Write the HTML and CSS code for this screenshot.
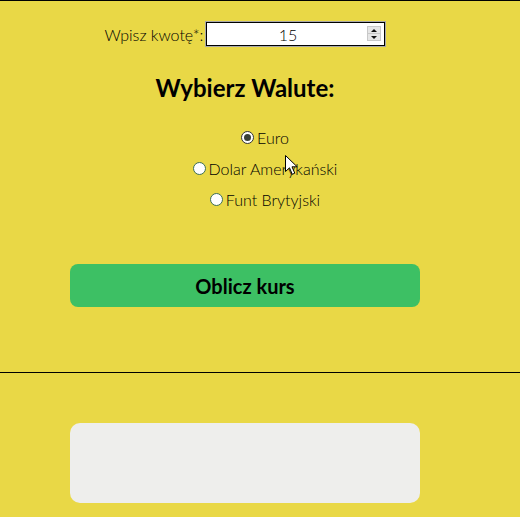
FILE: index.html
```html
<!DOCTYPE html>
<html lang="pl">
<head>
<meta charset="utf-8">
<title>Kalkulator walut</title>
<link rel="stylesheet" href="styles.css">
</head>
<body>
<section class="calc">
  <div class="inner">
    <div class="amount-row">
      <label class="amount-label" for="amount">Wpisz kwotę*:</label>
      <div class="num-wrap">
        <input class="num" id="amount" type="text" value="15">
        <span class="spin"><span class="spin-up"></span><span class="spin-down"></span></span>
      </div>
    </div>
    <h2 class="title">Wybierz Walute:</h2>
    <div class="radios">
      <label class="opt"><input type="radio" name="cur" checked><span>Euro</span></label>
      <label class="opt"><input type="radio" name="cur"><span>Dolar Amerykański</span></label>
      <label class="opt"><input type="radio" name="cur"><span>Funt Brytyjski</span></label>
    </div>
    <button class="btn" type="button">Oblicz kurs</button>
  </div>
</section>
<section class="result">
  <div class="inner">
    <div class="result-box"></div>
  </div>
</section>
<svg class="cursor" width="14" height="22" viewBox="0 0 14 22"><path d="M0.5 0.5 L0.5 16.5 L4.5 12.8 L7.3 19.3 L9.8 18.2 L7 11.8 L12.2 11.8 Z" fill="#fff" stroke="#000" stroke-width="1" stroke-linejoin="miter"/></svg>
</body>
</html>
```

FILE: styles.css
```css
html, body {
  margin: 0;
  padding: 0;
}
body {
  background: #e9d846;
  font-family: Lato, "Noto Sans", sans-serif;
  color: #000;
  position: relative;
  height: 517px;
  overflow: hidden;
}
.calc {
  border-top: 1px solid #000;
  height: 371px;
}
.inner {
  width: 490px;
  display: flex;
  flex-direction: column;
  align-items: center;
}
.amount-row {
  margin-top: 21px;
  display: flex;
  align-items: center;
  gap: 2px;
}
.amount-label {
  font-size: 16px;
  font-weight: 300;
  color: #000;
}
.num-wrap {
  position: relative;
  margin-left: 1px;
}
.num {
  box-sizing: border-box;
  width: 179px;
  height: 24px;
  border: 1px solid #000;
  box-shadow: 0 0 0 1px #a9a9a9;
  background: #fff;
  font-family: Lato, sans-serif;
  font-size: 16px;
  font-weight: 300;
  text-align: center;
  padding: 0 16px 0 0;
  color: #000;
  outline: none;
}
.spin {
  position: absolute;
  right: 4px;
  top: 4px;
  width: 14px;
  height: 15px;
  background: #e6e6e6;
  border: 1px solid #c8c8c8;
  box-sizing: border-box;
  display: flex;
  flex-direction: column;
}
.spin-up, .spin-down {
  flex: 1;
  position: relative;
}
.spin-up { border-bottom: 1px solid #c8c8c8; }
.spin-up::after, .spin-down::after {
  content: "";
  position: absolute;
  left: 3px;
  border-left: 3px solid transparent;
  border-right: 3px solid transparent;
}
.spin-up::after { top: 2px; border-bottom: 3px solid #111; }
.spin-down::after { top: 2px; border-top: 3px solid #111; }
.title {
  margin: 27px 0 0;
  font-size: 24px;
  font-weight: 700;
  color: #000;
  line-height: 29px;
}
.radios {
  margin-top: 26px;
  margin-left: 40px;
  display: flex;
  flex-direction: column;
  align-items: center;
  gap: 12px;
}
.opt {
  display: flex;
  align-items: center;
  font-size: 16px;
  font-weight: 300;
  line-height: 19px;
  color: #000;
}
.opt input {
  appearance: none;
  -webkit-appearance: none;
  width: 13px;
  height: 13px;
  margin: 0 3px 0 0;
  border: 1px solid #3d6e55;
  border-radius: 50%;
  background: #fff;
  box-sizing: border-box;
  position: relative;
}
.opt input:checked {
  border-color: #333;
}
.opt input:checked::after {
  content: "";
  position: absolute;
  left: 2px;
  top: 2px;
  width: 7px;
  height: 7px;
  border-radius: 50%;
  background: #3a4136;
}
.btn {
  margin-top: 55px;
  width: 350px;
  height: 43px;
  border: none;
  border-radius: 8px;
  background: #3dc064;
  font-family: Lato, sans-serif;
  font-size: 20px;
  font-weight: 700;
  color: #000;
}
.result {
  border-top: 1px solid #000;
  height: 144px;
}
.result-box {
  margin-top: 50px;
  width: 350px;
  height: 80px;
  border-radius: 10px;
  background: #eeeeec;
}
.cursor {
  position: absolute;
  left: 285px;
  top: 155px;
}
```
